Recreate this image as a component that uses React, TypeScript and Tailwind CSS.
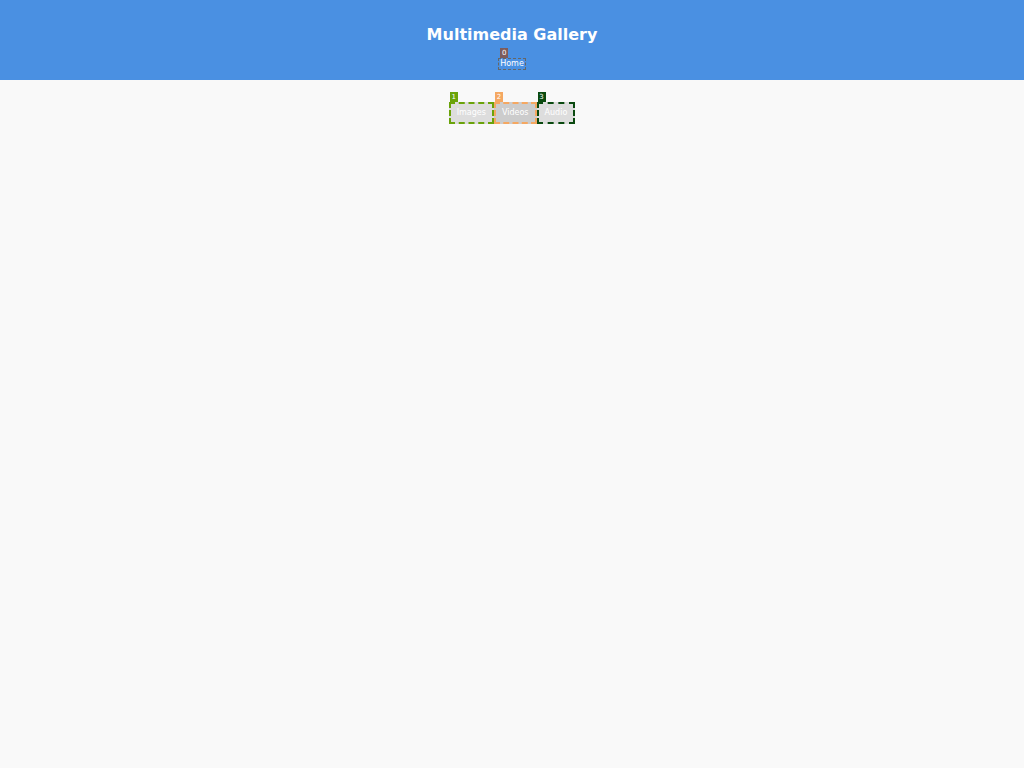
const tabs = [
  { label: "Images", n: "1", badge: "bg-[#6aa30a]", border: "border-[#6aa30a]", bg: "bg-[#dddddd]" },
  { label: "Videos", n: "2", badge: "bg-[#f5a862]", border: "border-[#f5a862]", bg: "bg-[#cccccc]" },
  { label: "Audio", n: "3", badge: "bg-[#0b4a10]", border: "border-[#0b4a10]", bg: "bg-[#dddddd]" },
];

export default function App() {
  return (
    <div className="min-h-screen bg-[#f9f9f9] font-['DejaVu_Sans',sans-serif]">
      {/* Header */}
      <header className="bg-[#4a90e2] h-20 flex flex-col items-center pt-[25px] text-white">
        <h1 className="text-[16px] leading-5 font-bold">Multimedia Gallery</h1>
        <nav className="mt-[13px] relative">
          <span className="absolute -top-[10px] left-[2px] w-2 bg-[#7d5c5c] text-white text-[7px] leading-[10px] text-center">
            0
          </span>
          <a href="#" className="block border border-dashed border-[#666] text-[8px] leading-[8px] px-[1px] py-[1px] text-white">
            Home
          </a>
        </nav>
      </header>

      {/* Tabs */}
      <div className="flex justify-center pt-[22px]">
        {tabs.map((t) => (
          <div key={t.n} className="relative">
            <span className={`absolute -top-[10px] left-[1px] w-2 ${t.badge} text-white text-[7px] leading-[10px] text-center`}>
              {t.n}
            </span>
            <button className={`block ${t.bg} border-2 border-dashed ${t.border} text-white text-[8px] leading-[9px] px-[6px] pt-[4px] pb-[5px]`}>
              {t.label}
            </button>
          </div>
        ))}
      </div>
    </div>
  );
}
